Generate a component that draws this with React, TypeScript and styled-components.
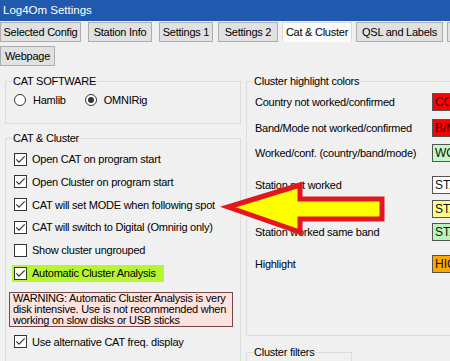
import React from "react";
import styled, { createGlobalStyle } from "styled-components";

const GlobalStyle = createGlobalStyle`
  html, body {
    margin: 0;
    padding: 0;
    background: #f0f0f0;
  }
  body {
    font-family: "Liberation Sans", Arial, sans-serif;
    font-size: 11px;
    color: #000;
  }
`;

const Window = styled.div`
  position: relative;
  width: 450px;
  height: 361px;
  overflow: hidden;
  background: #f0f0f0;
`;

const TitleBar = styled.div`
  height: 21px;
  box-sizing: border-box;
  padding: 0 0 2px 3px;
  display: flex;
  align-items: center;
  background: #2159ae;
  color: #fff;
  font-size: 11.5px;
`;

const TabRow = styled.div<{ $top: number }>`
  display: flex;
  height: 20px;
  margin-top: ${(p) => p.$top}px;
`;

const Tab = styled.div<{ $w: number; $ml?: number; $active?: boolean }>`
  flex: none;
  box-sizing: border-box;
  width: ${(p) => p.$w}px;
  height: 20px;
  margin-left: ${(p) => p.$ml ?? 0}px;
  display: flex;
  align-items: center;
  justify-content: center;
  white-space: nowrap;
  overflow: hidden;
  letter-spacing: -0.25px;
  background: ${(p) => (p.$active ? "#fbfbfb" : "#e1e1e1")};
  border: 1px solid ${(p) => (p.$active ? "#d9d9d9" : "#adadad")};
  border-bottom-color: ${(p) => (p.$active ? "#fbfbfb" : "#adadad")};
`;

const Content = styled.div`
  display: grid;
  grid-template-columns: 236px 230px;
  column-gap: 5px;
  padding-left: 5px;
  align-items: start;
  letter-spacing: -0.25px;
`;

const Column = styled.div`
  display: flex;
  flex-direction: column;
`;

const Group = styled.fieldset<{ $mt: number; $pt: number; $pb: number; $w?: number }>`
  margin: ${(p) => p.$mt}px 0 0 0;
  padding: ${(p) => p.$pt}px 0 ${(p) => p.$pb}px 8px;
  border: 1px solid #dcdcdc;
  min-width: 0;
  width: ${(p) => (p.$w ? `${p.$w}px` : "auto")};
  box-sizing: border-box;
`;

const Legend = styled.legend`
  margin-left: -2px;
  padding: 0 1px;
  line-height: 14px;
  font-size: 11px;
`;

const RadioRow = styled.div`
  display: flex;
  align-items: center;
  gap: 19px;
  height: 14px;
`;

const Option = styled.label`
  display: flex;
  align-items: center;
  gap: 7px;
  white-space: nowrap;
`;

const RadioDot = styled.span<{ $on?: boolean }>`
  position: relative;
  flex: none;
  width: 12px;
  height: 12px;
  box-sizing: border-box;
  border: 1px solid #333;
  border-radius: 50%;
  background: #fff;
  &::after {
    content: "";
    display: ${(p) => (p.$on ? "block" : "none")};
    position: absolute;
    left: 2px;
    top: 2px;
    width: 6px;
    height: 6px;
    border-radius: 50%;
    background: #333;
  }
`;

const CheckList = styled.div`
  display: flex;
  flex-direction: column;
  gap: 6.8px;
`;

const CheckRow = styled.label<{ $mark?: boolean; $mt?: number }>`
  display: flex;
  align-items: center;
  gap: 5px;
  height: ${(p) => (p.$mark ? 17 : 16)}px;
  margin-top: ${(p) => p.$mt ?? 0}px;
  white-space: nowrap;
  align-self: flex-start;
  ${(p) =>
    p.$mark
      ? `background: #b6f62e; margin-left: -2px; padding: 0 8px 0 2px; margin-bottom: -1px;`
      : ""}
`;

const Box = styled.span`
  flex: none;
  width: 13px;
  height: 13px;
  box-sizing: border-box;
  border: 1px solid #333;
  background: #fff;
  display: flex;
`;

const Warning = styled.div`
  margin: 11px 0 0 -5px;
  width: 224px;
  box-sizing: border-box;
  padding: 0 2px 0 3px;
  border: 1px solid #744848;
  background: #fde3df;
  line-height: 11px;
  white-space: nowrap;
`;

const ColorRow = styled.div<{ $mt: number }>`
  display: flex;
  align-items: center;
  height: 18px;
  margin-top: ${(p) => p.$mt}px;
`;

const ColorLabel = styled.span`
  flex: none;
  width: 177px;
  white-space: nowrap;
`;

const Swatch = styled.span<{ $bg: string; $fg?: string }>`
  flex: none;
  width: 60px;
  height: 18px;
  box-sizing: border-box;
  border: 1px solid #555;
  background: ${(p) => p.$bg};
  color: ${(p) => p.$fg ?? "#111"};
  padding-left: 2px;
  font-size: 12px;
  line-height: 16px;
  letter-spacing: 0;
  overflow: hidden;
  white-space: nowrap;
`;

const Overlay = styled.svg`
  position: absolute;
  left: 0;
  top: 0;
  pointer-events: none;
`;

const Check = ({ on }: { on?: boolean }) => (
  <Box>
    {on && (
      <svg width="11" height="11" viewBox="0 0 11 11">
        <polyline points="1.3,5.3 4,8.2 9.7,2.3" fill="none" stroke="#333" strokeWidth="1.2" />
      </svg>
    )}
  </Box>
);

const tabs1 = [
  { t: "Selected Config", w: 81, ml: 0 },
  { t: "Station Info", w: 64, ml: 7 },
  { t: "Settings 1", w: 54, ml: 7 },
  { t: "Settings 2", w: 60, ml: 5 },
  { t: "Cat & Cluster", w: 70, ml: 4, active: true },
  { t: "QSL and Labels", w: 87, ml: 4 },
  { t: "Webservices", w: 70, ml: 4 },
];

const checks = [
  { t: "Open CAT on program start", on: true },
  { t: "Open Cluster on program start", on: true },
  { t: "CAT will set MODE when following spot", on: true },
  { t: "CAT will switch to Digital (Omnirig only)", on: true },
  { t: "Show cluster ungrouped", on: false },
];

const colors = [
  { t: "Country not worked/confirmed", s: "COUNTRY", bg: "#ff0000", fg: "#3a0000", mt: 5 },
  { t: "Band/Mode not worked/confirmed", s: "B/MODE", bg: "#ff0000", fg: "#3a0000", mt: 8 },
  { t: "Worked/conf. (country/band/mode)", s: "WORKED", bg: "#c6f7c6", mt: 7 },
  { t: "Station not worked", s: "STATION", bg: "#ffffff", mt: 14 },
  { t: "Station worked", s: "STATION", bg: "#ffff88", mt: 6 },
  { t: "Station worked same band", s: "STATION", bg: "#bdf3bd", mt: 5 },
  { t: "Highlight", s: "HIGHLIGHT", bg: "#ffa500", mt: 14 },
];

export default function App() {
  return (
    <Window>
      <GlobalStyle />
      <TitleBar>Log4Om Settings</TitleBar>
      <TabRow $top={1}>
        {tabs1.map((x) => (
          <Tab key={x.t} $w={x.w} $ml={x.ml} $active={x.active}>
            {x.t}
          </Tab>
        ))}
      </TabRow>
      <TabRow $top={4}>
        <Tab $w={55}>Webpage</Tab>
      </TabRow>
      <Content>
        <Column>
          <Group $mt={8} $pt={5} $pb={16}>
            <Legend>CAT SOFTWARE</Legend>
            <RadioRow>
              <Option>
                <RadioDot />
                Hamlib
              </Option>
              <Option>
                <RadioDot $on />
                OMNIRig
              </Option>
            </RadioRow>
          </Group>
          <Group $mt={7} $pt={6} $pb={30}>
            <Legend>CAT &amp; Cluster</Legend>
            <CheckList>
              {checks.map((c) => (
                <CheckRow key={c.t}>
                  <Check on={c.on} />
                  {c.t}
                </CheckRow>
              ))}
              <CheckRow $mark>
                <Check on />
                Automatic Cluster Analysis
              </CheckRow>
            </CheckList>
            <Warning>
              WARNING: Automatic Cluster Analysis is very
              <br />
              disk intensive. Use is not recommended when
              <br />
              working on slow disks or USB sticks
            </Warning>
            <CheckRow $mt={7}>
              <Check on />
              Use alternative CAT freq. display
            </CheckRow>
          </Group>
        </Column>
        <Column>
          <Group $mt={8} $pt={0} $pb={62}>
            <Legend>Cluster highlight colors</Legend>
            {colors.map((c) => (
              <ColorRow key={c.t} $mt={c.mt}>
                <ColorLabel>{c.t}</ColorLabel>
                <Swatch $bg={c.bg} $fg={c.fg}>
                  {c.s}
                </Swatch>
              </ColorRow>
            ))}
          </Group>
          <Group $mt={9} $pt={4} $pb={20} $w={106}>
            <Legend>Cluster filters</Legend>
          </Group>
        </Column>
      </Content>
      <Overlay width="450" height="361" viewBox="0 0 450 361">
        <polygon
          points="228,207 300,185 300,199 382,199 382,219 300,219 300,232"
          fill="#ffff00"
          stroke="#e3161d"
          strokeWidth="5"
          strokeLinejoin="miter"
          strokeMiterlimit="10"
        />
      </Overlay>
    </Window>
  );
}
